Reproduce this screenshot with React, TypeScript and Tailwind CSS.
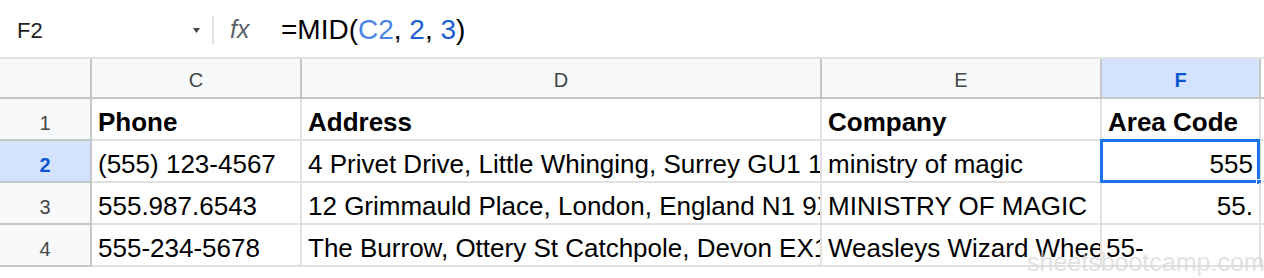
import React from "react";

const cols = [
  { key: "C", w: "w-[210px]" },
  { key: "D", w: "w-[520px]" },
  { key: "E", w: "w-[280px]" },
  { key: "F", w: "w-[159px]" },
];

type Cell = { text: string; right?: boolean };

const rows: { n: number; cells: Cell[]; bold?: boolean }[] = [
  {
    n: 1,
    bold: true,
    cells: [{ text: "Phone" }, { text: "Address" }, { text: "Company" }, { text: "Area Code" }],
  },
  {
    n: 2,
    cells: [
      { text: "(555) 123-4567" },
      { text: "4 Privet Drive, Little Whinging, Surrey GU1 1AA" },
      { text: "ministry of magic" },
      { text: "555", right: true },
    ],
  },
  {
    n: 3,
    cells: [
      { text: "555.987.6543" },
      { text: "12 Grimmauld Place, London, England N1 9XY" },
      { text: "MINISTRY OF MAGIC" },
      { text: "55.", right: true },
    ],
  },
  {
    n: 4,
    cells: [
      { text: "555-234-5678" },
      { text: "The Burrow, Ottery St Catchpole, Devon EX11 1AA" },
      { text: "Weasleys Wizard Wheezes" },
      { text: "55-" },
    ],
  },
];

const FormulaBar = () => (
  <div className="flex items-center h-[59px] pt-[3px] border-b-2 border-[#e1e3e1] bg-white">
    <div className="w-[212px] flex items-center justify-between pl-[17px] pr-[12px]">
      <span className="text-[22px] text-[#1f1f1f]">F2</span>
      <svg width="7" height="5" viewBox="0 0 7 5">
        <path d="M0 0 L7 0 L3.5 5 Z" fill="#444746" />
      </svg>
    </div>
    <div className="w-[2px] h-[28px] bg-[#e1e3e1]" />
    <span className="ml-[16px] italic text-[25px] text-[#5f6368] w-[37px]">fx</span>
    <div className="ml-[14px] text-[28px] text-black">
      =MID(<span className="text-[#4a86e8]">C2</span>, <span className="text-[#1a5fd0]">2</span>,{" "}
      <span className="text-[#1a5fd0]">3</span>)
    </div>
  </div>
);

export default function App() {
  return (
    <div
      className="relative w-[1264px] h-[278px] bg-white overflow-hidden"
      style={{ fontFamily: '"Liberation Sans", Arial, sans-serif' }}
    >
      <FormulaBar />

      {/* column headers */}
      <div className="flex h-[40px]">
        <div className="w-[92px] bg-[#f8f9fa] border-r-2 border-b-2 border-[#c4c7c5]" />
        {cols.map((c) => (
          <div
            key={c.key}
            className={`${c.w} flex items-center justify-center pt-[4px] border-r-2 border-b-2 border-[#c4c7c5] text-[20px] ${
              c.key === "F" ? "bg-[#d3e3fd] text-[#0b57d0] font-bold" : "bg-[#f8f9fa] text-[#444746]"
            }`}
          >
            {c.key}
          </div>
        ))}
        <div className="flex-1 border-b-2 border-[#c4c7c5]" />
      </div>

      {/* data rows */}
      {rows.map((r) => (
        <div key={r.n} className="flex h-[42px]">
          <div
            className={`w-[92px] flex items-center justify-center pt-[7px] border-r-2 border-b-2 border-[#c4c7c5] text-[20px] ${
              r.n === 2 ? "bg-[#d3e3fd] text-[#0b57d0] font-bold" : "bg-[#f8f9fa] text-[#444746]"
            }`}
          >
            {r.n}
          </div>
          {r.cells.map((cell, i) => {
            const selected = r.n === 2 && i === 3;
            return (
              <div
                key={i}
                className={`${cols[i].w} relative flex border-r-2 border-b-2 border-[#e1e1e1] text-[26px] text-black ${
                  r.bold ? "font-bold" : ""
                }`}
              >
                <div
                  className={`flex-1 flex items-center pt-[7px] px-[6px] overflow-hidden whitespace-nowrap ${
                    cell.right ? "justify-end" : ""
                  } ${i === 3 && r.n === 4 ? "pl-[4px]" : ""}`}
                >
                  {cell.text}
                </div>
                {selected && (
                  <>
                    <div className="absolute -left-[2px] -top-[2px] -right-[1px] bottom-[-2px] border-[3px] border-[#1a73e8]" />
                    <div className="absolute right-[-3px] bottom-[-4px] w-[6px] h-[6px] bg-[#1a73e8] border border-white" />
                  </>
                )}
              </div>
            );
          })}
          <div className="flex-1 border-b-2 border-[#e1e1e1]" />
        </div>
      ))}

      {/* watermark */}
      <div className="absolute left-[1027px] top-[244px] text-[25px] text-[#d6d6d6] opacity-70 pointer-events-none">
        sheetsbootcamp.com
      </div>
    </div>
  );
}
